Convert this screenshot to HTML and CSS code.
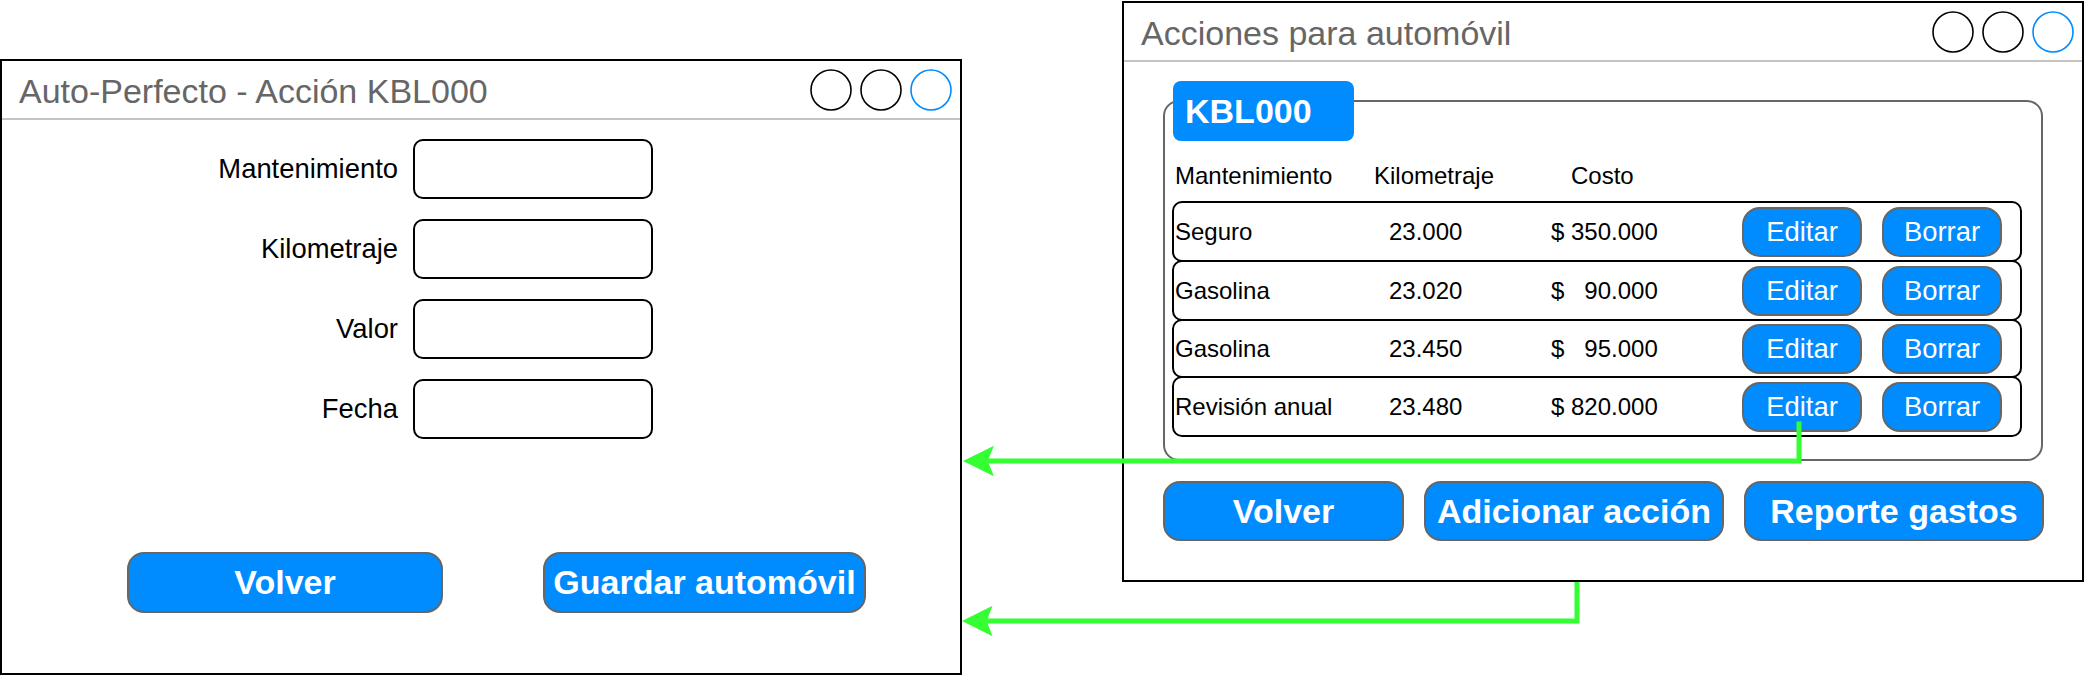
FILE: index.html
```html
<!DOCTYPE html>
<html lang="es">
<head>
<meta charset="utf-8">
<title>Auto-Perfecto</title>
<link rel="stylesheet" href="styles.css">
</head>
<body>
<div class="desk">

  <section class="win win-left">
    <header class="titlebar">
      <span class="title">Auto-Perfecto - Acción KBL000</span>
      <div class="controls">
        <svg class="ctl" viewBox="0 0 42 42"><circle cx="21" cy="21" r="20" class="ctl-dark"/></svg>
        <svg class="ctl" viewBox="0 0 42 42"><circle cx="21" cy="21" r="20" class="ctl-dark"/></svg>
        <svg class="ctl" viewBox="0 0 42 42"><circle cx="21" cy="21" r="20" class="ctl-blue"/></svg>
      </div>
    </header>

    <div class="form">
      <label class="form-label">Mantenimiento</label>
      <div class="field"></div>
      <label class="form-label">Kilometraje</label>
      <div class="field"></div>
      <label class="form-label">Valor</label>
      <div class="field"></div>
      <label class="form-label">Fecha</label>
      <div class="field"></div>
    </div>

    <div class="actions-left">
      <div class="btn btn-volver-l">Volver</div>
      <div class="btn btn-guardar">Guardar automóvil</div>
    </div>
  </section>

  <section class="win win-right">
    <header class="titlebar">
      <span class="title">Acciones para automóvil</span>
      <div class="controls">
        <svg class="ctl" viewBox="0 0 42 42"><circle cx="21" cy="21" r="20" class="ctl-dark"/></svg>
        <svg class="ctl" viewBox="0 0 42 42"><circle cx="21" cy="21" r="20" class="ctl-dark"/></svg>
        <svg class="ctl" viewBox="0 0 42 42"><circle cx="21" cy="21" r="20" class="ctl-blue"/></svg>
      </div>
    </header>

    <div class="group">
      <div class="tab">KBL000</div>
      <div class="thead">
        <span class="th th-name">Mantenimiento</span>
        <span class="th th-km">Kilometraje</span>
        <span class="th th-cost">Costo</span>
      </div>
      <div class="rows">
        <div class="row">
          <span class="cell c-name">Seguro</span>
          <span class="cell c-km">23.000</span>
          <span class="cell c-cost">$ 350.000</span>
          <span class="btn-sm">Editar</span>
          <span class="btn-sm">Borrar</span>
        </div>
        <div class="row">
          <span class="cell c-name">Gasolina</span>
          <span class="cell c-km">23.020</span>
          <span class="cell c-cost">$   90.000</span>
          <span class="btn-sm">Editar</span>
          <span class="btn-sm">Borrar</span>
        </div>
        <div class="row row-short">
          <span class="cell c-name">Gasolina</span>
          <span class="cell c-km">23.450</span>
          <span class="cell c-cost">$   95.000</span>
          <span class="btn-sm">Editar</span>
          <span class="btn-sm">Borrar</span>
        </div>
        <div class="row">
          <span class="cell c-name">Revisión anual</span>
          <span class="cell c-km">23.480</span>
          <span class="cell c-cost">$ 820.000</span>
          <span class="btn-sm">Editar</span>
          <span class="btn-sm">Borrar</span>
        </div>
      </div>
    </div>

    <div class="actions-right">
      <div class="btn btn-volver-r">Volver</div>
      <div class="btn btn-adicionar">Adicionar acción</div>
      <div class="btn btn-reporte">Reporte gastos</div>
    </div>
  </section>

  <svg class="links" viewBox="0 0 2084 676" width="2084" height="676">
    <path class="link" d="M1799 421.5 V461 H988"/>
    <polygon class="head" points="963,461 994,445.7 987.7,461 994,476.3"/>
    <path class="link" d="M1577 582 V621 H987"/>
    <polygon class="head" points="962,621 992.5,605.7 986.7,621 992.5,636.3"/>
  </svg>

</div>
</body>
</html>
```

FILE: styles.css
```css
html, body {
  margin: 0;
  padding: 0;
  background: #fff;
}

body {
  font-family: "Liberation Sans", Arial, Helvetica, sans-serif;
  color: #000;
}

.desk {
  position: relative;
  width: 2084px;
  height: 676px;
  overflow: hidden;
}

/* windows */
.win {
  position: absolute;
  box-sizing: border-box;
  border: 2px solid #000;
  background: #fff;
  display: flex;
  flex-direction: column;
}

.win-left {
  left: 0;
  top: 59px;
  width: 962px;
  height: 616px;
}

.win-right {
  left: 1122px;
  top: 1px;
  width: 962px;
  height: 581px;
}

.titlebar {
  flex: none;
  height: 59px;
  box-sizing: border-box;
  border-bottom: 2px solid #c4c4c4;
  display: flex;
  align-items: center;
  justify-content: space-between;
  padding: 0 8px 0 17px;
}

.title {
  font-size: 34px;
  color: #666;
  margin-top: 4px;
  white-space: nowrap;
}

.controls {
  display: flex;
  gap: 8px;
}

.ctl {
  width: 42px;
  height: 42px;
  display: block;
}

.ctl-dark {
  fill: none;
  stroke: #000;
  stroke-width: 1.6;
}

.ctl-blue {
  fill: none;
  stroke: #008cff;
  stroke-width: 1.6;
}

/* left form */
.form {
  display: grid;
  grid-template-columns: 396px 240px;
  column-gap: 15px;
  row-gap: 20px;
  margin-top: 19px;
}

.form-label {
  font-size: 27.4px;
  text-align: right;
  align-self: center;
  white-space: nowrap;
}

.field {
  height: 60px;
  box-sizing: border-box;
  border: 2px solid #000;
  border-radius: 10px;
}

/* buttons */
.btn {
  box-sizing: border-box;
  height: 61px;
  border: 2px solid #666;
  border-radius: 17px;
  background: #008cff;
  color: #fff;
  font-weight: 700;
  font-size: 34px;
  display: flex;
  align-items: center;
  justify-content: center;
  white-space: nowrap;
}

.actions-left {
  display: flex;
  gap: 100px;
  padding-left: 125px;
  margin-top: 113px;
}

.btn-volver-l { width: 316px; }
.btn-guardar { width: 323px; }

.actions-right {
  display: flex;
  gap: 20px;
  padding-left: 39px;
  margin-top: 20px;
}

.actions-right .btn { height: 60px; }
.btn-volver-r { width: 241px; }
.btn-adicionar { width: 300px; }
.btn-reporte { width: 300px; }

/* group box */
.group {
  position: relative;
  flex: none;
  margin: 38px 0 0 39px;
  width: 880px;
  height: 361px;
  box-sizing: border-box;
  border: 2px solid #666;
  border-radius: 16px;
  padding: 60px 0 0 7px;
}

.tab {
  position: absolute;
  left: 8px;
  top: -21px;
  width: 181px;
  height: 60px;
  box-sizing: border-box;
  padding-left: 12px;
  border-radius: 8px;
  background: #008cff;
  color: #fff;
  font-weight: 700;
  font-size: 34px;
  display: flex;
  align-items: center;
}

.thead {
  display: flex;
  height: 28px;
  line-height: 28px;
  font-size: 24px;
  padding-left: 3px;
  margin-bottom: 11px;
}

.th-name { width: 199px; }
.th-km { width: 197px; }

.rows {
  display: flex;
  flex-direction: column;
  width: 850px;
}

.row {
  box-sizing: border-box;
  height: 61px;
  border: 2px solid #000;
  border-radius: 10px;
  display: flex;
  align-items: center;
  padding-left: 1px;
  font-size: 24px;
  background: #fff;
}

.row + .row { margin-top: -2px; }
.row-short { height: 59px; }

.cell { white-space: pre; }
.c-name { width: 214px; }
.c-km { width: 162px; }
.c-cost { width: 191px; }

.btn-sm {
  box-sizing: border-box;
  width: 120px;
  height: 50px;
  border: 2px solid #666;
  border-radius: 18px;
  background: #008cff;
  color: #fff;
  font-size: 27.4px;
  display: flex;
  align-items: center;
  justify-content: center;
}

.btn-sm + .btn-sm { margin-left: 20px; }

/* connectors */
.links {
  position: absolute;
  left: 0;
  top: 0;
  pointer-events: none;
}

.link {
  fill: none;
  stroke: #33ff33;
  stroke-width: 5;
  stroke-linejoin: miter;
}

.head {
  fill: #33ff33;
  stroke: none;
}
```
